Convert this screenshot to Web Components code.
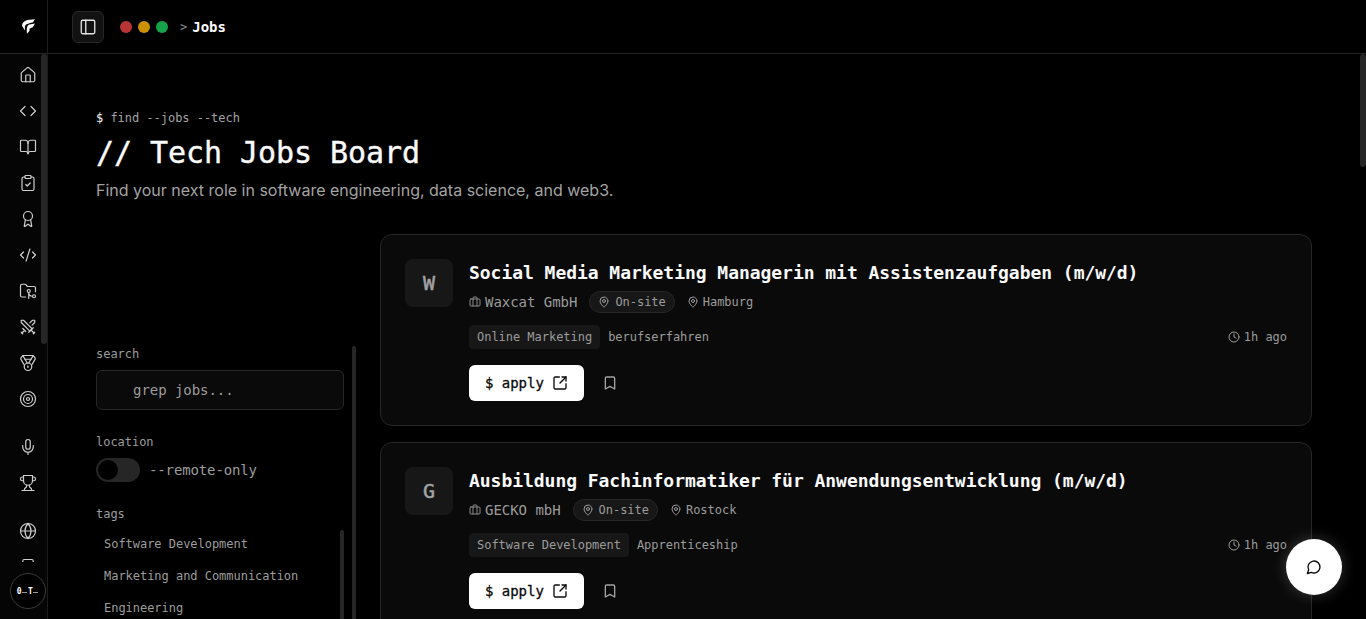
<!DOCTYPE html>
<html>
<head>
<meta charset="utf-8">
<title>Jobs</title>
<style>
    html, body { margin: 0; height: 100%; background: #000; overflow: hidden; }
    body {
        display: flex;
        color: #fafafa;
        font-family: "DejaVu Sans Mono", "Liberation Mono", monospace;
    }
</style>
</head>
<body>
<side-rail></side-rail>
<main-area>
    <top-bar></top-bar>
    <page-head></page-head>
    <jobs-layout>
        <job-filters slot="filters"></job-filters>
        <job-card title="Social Media Marketing Managerin mit Assistenzaufgaben (m/w/d)" company="Waxcat GmbH" letter="W" city="Hamburg" tag="Online Marketing" level="berufserfahren"></job-card>
        <job-card title="Ausbildung Fachinformatiker für Anwendungsentwicklung (m/w/d)" company="GECKO mbH" letter="G" city="Rostock" tag="Software Development" level="Apprenticeship"></job-card>
    </jobs-layout>
</main-area>
<chat-fab></chat-fab>

<script>
const ICONS = {
    house: '<path d="M15 21v-8a1 1 0 0 0-1-1h-4a1 1 0 0 0-1 1v8"/><path d="M3 10a2 2 0 0 1 .709-1.528l7-5.999a2 2 0 0 1 2.582 0l7 5.999A2 2 0 0 1 21 10v9a2 2 0 0 1-2 2H5a2 2 0 0 1-2-2z"/>',
    code: '<polyline points="16 18 22 12 16 6"/><polyline points="8 6 2 12 8 18"/>',
    book: '<path d="M12 7v14"/><path d="M3 18a1 1 0 0 1-1-1V4a1 1 0 0 1 1-1h5a4 4 0 0 1 4 4 4 4 0 0 1 4-4h5a1 1 0 0 1 1 1v13a1 1 0 0 1-1 1h-6a3 3 0 0 0-3 3 3 3 0 0 0-3-3z"/>',
    clipboard: '<rect width="8" height="4" x="8" y="2" rx="1" ry="1"/><path d="M16 4h2a2 2 0 0 1 2 2v14a2 2 0 0 1-2 2H6a2 2 0 0 1-2-2V6a2 2 0 0 1 2-2h2"/><path d="m9 14 2 2 4-4"/>',
    award: '<path d="m15.477 12.89 1.515 8.526a.5.5 0 0 1-.81.47l-3.58-2.687a1 1 0 0 0-1.197 0l-3.586 2.686a.5.5 0 0 1-.81-.469l1.514-8.526"/><circle cx="12" cy="8" r="6"/>',
    xml: '<path d="m18 16 4-4-4-4"/><path d="m6 8-4 4 4 4"/><path d="m14.5 4-5 16"/>',
    folder: '<path d="M9 20H4a2 2 0 0 1-2-2V5a2 2 0 0 1 2-2h3.9a2 2 0 0 1 1.69.9l.81 1.2a2 2 0 0 0 1.67.9H20a2 2 0 0 1 2 2v5"/><circle cx="13" cy="12" r="2"/><path d="M18 19c-2.8 0-5-2.2-5-5v8"/><circle cx="20" cy="19" r="2"/>',
    swords: '<polyline points="14.5 17.5 3 6 3 3 6 3 17.5 14.5"/><line x1="13" x2="19" y1="19" y2="13"/><line x1="16" x2="20" y1="16" y2="20"/><line x1="19" x2="21" y1="21" y2="19"/><polyline points="14.5 6.5 18 3 21 3 21 6 17.5 9.5"/><line x1="5" x2="9" y1="14" y2="18"/><line x1="7" x2="4" y1="17" y2="20"/><line x1="3" x2="5" y1="19" y2="21"/>',
    medal: '<path d="M7.21 15 2.66 7.14a2 2 0 0 1 .13-2.2L4.4 2.8A2 2 0 0 1 6 2h12a2 2 0 0 1 1.6.8l1.6 2.14a2 2 0 0 1 .14 2.2L16.79 15"/><path d="M11 12 5.12 2.2"/><path d="m13 12 5.88-9.8"/><path d="M8 7h8"/><circle cx="12" cy="17" r="5"/><path d="M12 18v-2h-.5"/>',
    target: '<circle cx="12" cy="12" r="10"/><circle cx="12" cy="12" r="6"/><circle cx="12" cy="12" r="2"/>',
    mic: '<path d="M12 19v3"/><path d="M19 10v2a7 7 0 0 1-14 0v-2"/><rect x="9" y="2" width="6" height="13" rx="3"/>',
    trophy: '<path d="M6 9H4.5a2.5 2.5 0 0 1 0-5H6"/><path d="M18 9h1.5a2.5 2.5 0 0 0 0-5H18"/><path d="M4 22h16"/><path d="M10 14.66V17c0 .55-.47.98-.97 1.21C7.85 18.75 7 20.24 7 22"/><path d="M14 14.66V17c0 .55.47.98.97 1.21C16.15 18.75 17 20.24 17 22"/><path d="M18 2H6v7a6 6 0 0 0 12 0V2Z"/>',
    globe: '<circle cx="12" cy="12" r="10"/><path d="M12 2a14.5 14.5 0 0 0 0 20 14.5 14.5 0 0 0 0-20"/><path d="M2 12h20"/>',
    phone: '<rect width="14" height="20" x="5" y="2" rx="2"/><path d="M12 18h.01"/>',
    panel: '<rect width="18" height="18" x="3" y="3" rx="2"/><path d="M9 3v18"/>',
    briefcase: '<path d="M16 20V4a2 2 0 0 0-2-2h-4a2 2 0 0 0-2 2v16"/><rect width="20" height="14" x="2" y="6" rx="2"/>',
    pin: '<path d="M20 10c0 4.993-5.539 10.193-7.399 11.799a1 1 0 0 1-1.202 0C9.539 20.193 4 14.993 4 10a8 8 0 0 1 16 0"/><circle cx="12" cy="10" r="3"/>',
    clock: '<circle cx="12" cy="12" r="10"/><polyline points="12 6 12 12 16 14"/>',
    external: '<path d="M21 13v6a2 2 0 0 1-2 2H5a2 2 0 0 1-2-2V5a2 2 0 0 1 2-2h6"/><path d="m21 3-9 9"/><path d="M15 3h6v6"/>',
    bookmark: '<path d="m19 21-7-4-7 4V5a2 2 0 0 1 2-2h10a2 2 0 0 1 2 2v16z"/>',
    message: '<path d="M7.9 20A9 9 0 1 0 4 16.1L2 22Z"/>',
};

function icon(name, size, width = 2) {
    return `<svg xmlns="http://www.w3.org/2000/svg" width="${size}" height="${size}" viewBox="0 0 24 24" fill="none" stroke="currentColor" stroke-width="${width}" stroke-linecap="round" stroke-linejoin="round" style="display:block;flex:none">${ICONS[name]}</svg>`;
}

class SideRail extends HTMLElement {
    constructor() {
        super();
        this.attachShadow({ mode: 'open' });
    }

    connectedCallback() {
        const groups = [
            ['house', 'code', 'book', 'clipboard', 'award', 'xml', 'folder', 'swords', 'medal', 'target'],
            ['mic', 'trophy'],
            ['globe', 'phone'],
        ];
        const nav = groups.map(group => `
            <div class="group">${group.map(name => `<span class="item">${icon(name, 18, 1.6)}</span>`).join('')}</div>
        `).join('');

        this.shadowRoot.innerHTML = `
            <style>
                :host {
                    display: flex;
                    flex-direction: column;
                    flex: none;
                    width: 47px;
                    height: 100vh;
                    border-right: 1px solid #1c1c1c;
                    background: #050505;
                    position: relative;
                    overflow: hidden;
                }
                .logo {
                    flex: none;
                    height: 54px;
                    box-sizing: border-box;
                    display: flex;
                    align-items: center;
                    padding: 0 0 1px 22px;
                    border-bottom: 1px solid #262626;
                    background: #000;
                }
                nav {
                    flex: 1;
                    min-height: 0;
                    overflow: hidden;
                    padding: 3px 0 0;
                    color: #cfcfcf;
                }
                .group { display: flex; flex-direction: column; margin-bottom: 12px; }
                .item {
                    height: 36px;
                    display: flex;
                    align-items: center;
                    padding-left: 19px;
                }
                .bottom {
                    flex: none;
                    height: 57px;
                    box-sizing: border-box;
                    padding: 11px 0 0 10px;
                    background: #050505;
                }
                .avatar {
                    width: 36px;
                    height: 36px;
                    box-sizing: border-box;
                    border: 1px solid #3a3a3a;
                    border-radius: 50%;
                    background: #000;
                    display: flex;
                    align-items: center;
                    justify-content: center;
                    color: #fff;
                    font-size: 8px;
                    font-weight: 700;
                    letter-spacing: -.5px;
                    white-space: nowrap;
                }
                .dash { width: 5px; height: 1px; background: #999; margin: 2px 1px 0; }
                .thumb {
                    position: absolute;
                    left: 41px;
                    top: 54px;
                    width: 6px;
                    height: 290px;
                    border-radius: 3px;
                    background: #262626;
                }
            </style>
            <div class="logo">
                <svg width="13" height="15" viewBox="0 0 40 44" fill="#fafafa"><path d="M40 0 16 2C6 5 0 11 0 20L9 34V22C11 16 17 13 33 10Z"/><path d="M40 13 23 16C16 18 14 24 15 44L23 36V29L33 24Z"/></svg>
            </div>
            <nav>${nav}</nav>
            <div class="bottom"><span class="avatar">0<span class="dash"></span>T<span class="dash"></span></span></div>
            <span class="thumb"></span>
        `;
    }
}

class TopBar extends HTMLElement {
    constructor() {
        super();
        this.attachShadow({ mode: 'open' });
    }

    connectedCallback() {
        this.shadowRoot.innerHTML = `
            <style>
                :host {
                    display: flex;
                    align-items: center;
                    flex: none;
                    height: 53px;
                    padding-left: 24px;
                    border-bottom: 1px solid #262626;
                }
                .toggle {
                    width: 32px;
                    height: 32px;
                    box-sizing: border-box;
                    display: flex;
                    align-items: center;
                    justify-content: center;
                    border: 1px solid #262626;
                    border-radius: 6px;
                    background: #121212;
                    color: #e5e5e5;
                    margin-right: 16px;
                }
                .dot { width: 12px; height: 12px; border-radius: 50%; margin-right: 6px; }
                .sep { color: #8a8a8a; font-size: 12px; margin-left: 6px; margin-right: 5px; }
                .page { color: #fafafa; font-size: 14px; font-weight: 700; letter-spacing: -.03px; }
            </style>
            <span class="toggle">${icon('panel', 18, 1.75)}</span>
            <span class="dot" style="background:#b93434"></span>
            <span class="dot" style="background:#ca9200"></span>
            <span class="dot" style="background:#16a34a"></span>
            <span class="sep">&gt;</span>
            <span class="page">Jobs</span>
        `;
    }
}

class PageHead extends HTMLElement {
    constructor() {
        super();
        this.attachShadow({ mode: 'open' });
    }

    connectedCallback() {
        this.shadowRoot.innerHTML = `
            <style>
                :host {
                    display: block;
                    flex: none;
                    padding: 56px 48px 0;
                    height: 180px;
                    box-sizing: border-box;
                }
                .cmd { font-size: 12px; line-height: 16px; color: #a3a3a3; letter-spacing: -.03px; }
                .cmd b { color: #fafafa; font-weight: 400; }
                h1 {
                    margin: 9px 0 0;
                    font-size: 30px;
                    line-height: 36px;
                    font-weight: 400;
                    -webkit-text-stroke: .4px #fafafa;
                    letter-spacing: -.06px;
                    color: #fafafa;
                }
                p {
                    margin: 7px 0 0;
                    font: 400 16px/24px Inter, "Liberation Sans", sans-serif;
                    color: #a3a3a3;
                }
            </style>
            <div class="cmd"><b>$</b> find --jobs --tech</div>
            <h1>// Tech Jobs Board</h1>
            <p>Find your next role in software engineering, data science, and web3.</p>
        `;
    }
}

class MainArea extends HTMLElement {
    constructor() {
        super();
        this.attachShadow({ mode: 'open' });
    }

    connectedCallback() {
        this.shadowRoot.innerHTML = `
            <style>
                :host {
                    display: flex;
                    flex-direction: column;
                    flex: 1;
                    min-width: 0;
                    height: 100vh;
                    overflow: hidden;
                    position: relative;
                }
                .thumb {
                    position: absolute;
                    right: 0;
                    top: 54px;
                    width: 6px;
                    height: 113px;
                    border-radius: 3px;
                    background: #262626;
                }
            </style>
            <slot></slot>
            <span class="thumb"></span>
        `;
    }
}

class JobsLayout extends HTMLElement {
    constructor() {
        super();
        this.attachShadow({ mode: 'open' });
    }

    connectedCallback() {
        this.shadowRoot.innerHTML = `
            <style>
                :host {
                    display: flex;
                    gap: 24px;
                    flex: none;
                    padding: 0 54px 0 48px;
                }
                .filters { flex: none; width: 260px; padding-top: 112px; box-sizing: border-box; }
                .list { flex: 1; min-width: 0; display: flex; flex-direction: column; gap: 16px; }
            </style>
            <div class="filters"><slot name="filters"></slot></div>
            <div class="list"><slot></slot></div>
        `;
    }
}

class JobFilters extends HTMLElement {
    constructor() {
        super();
        this.attachShadow({ mode: 'open' });
    }

    connectedCallback() {
        const tags = ['Software Development', 'Marketing and Communication', 'Engineering'];
        this.shadowRoot.innerHTML = `
            <style>
                :host {
                    display: block;
                    position: relative;
                    width: 248px;
                    color: #9c9c9c;
                }
                label { display: block; font-size: 12px; line-height: 16px; margin-bottom: 8px; letter-spacing: -.03px; }
                .input {
                    height: 40px;
                    box-sizing: border-box;
                    border: 1px solid #262626;
                    border-radius: 6px;
                    background: #0a0a0a;
                    padding-left: 36px;
                    display: flex;
                    align-items: center;
                    font-size: 14px;
                    letter-spacing: -.05px;
                    margin-bottom: 24px;
                }
                .remote {
                    display: flex;
                    align-items: center;
                    gap: 9px;
                    font-size: 14px;
                    letter-spacing: -.13px;
                    height: 24px;
                    margin-bottom: 24px;
                }
                .switch {
                    width: 44px;
                    height: 24px;
                    border-radius: 12px;
                    background: #262626;
                    box-sizing: border-box;
                    padding: 2px;
                }
                .knob { display: block; width: 20px; height: 20px; border-radius: 50%; background: #000; }
                .tag { font-size: 12px; line-height: 16px; padding: 8px; letter-spacing: -.03px; }
                .thumb-outer, .thumb-inner {
                    position: absolute;
                    width: 4px;
                    border-radius: 2px;
                    background: #262626;
                }
                .thumb-outer { left: 256px; top: 0; height: 300px; }
                .thumb-inner { left: 244px; top: 184px; height: 120px; }
            </style>
            <label>search</label>
            <div class="input">grep jobs...</div>
            <label>location</label>
            <div class="remote"><span class="switch"><span class="knob"></span></span>--remote-only</div>
            <label style="margin-bottom:6px">tags</label>
            ${tags.map(t => `<div class="tag">${t}</div>`).join('')}
            <span class="thumb-outer"></span>
            <span class="thumb-inner"></span>
        `;
    }
}

class JobCard extends HTMLElement {
    constructor() {
        super();
        this.attachShadow({ mode: 'open' });
    }

    connectedCallback() {
        const title = this.getAttribute('title');
        const company = this.getAttribute('company');
        const letter = this.getAttribute('letter');
        const city = this.getAttribute('city');
        const tag = this.getAttribute('tag');
        const level = this.getAttribute('level');

        this.shadowRoot.innerHTML = `
            <style>
                :host {
                    display: flex;
                    gap: 16px;
                    box-sizing: border-box;
                    height: 192px;
                    padding: 24px;
                    background: #0a0a0a;
                    border: 1px solid #262626;
                    border-radius: 12px;
                }
                .logo {
                    flex: none;
                    width: 48px;
                    height: 48px;
                    border-radius: 8px;
                    background: #171717;
                    color: #a3a3a3;
                    display: flex;
                    align-items: center;
                    justify-content: center;
                    font-size: 20px;
                    -webkit-text-stroke: .5px #a3a3a3;
                }
                .body { flex: 1; min-width: 0; }
                h3 {
                    margin: 0;
                    font-size: 18px;
                    line-height: 28px;
                    font-weight: 700;
                    color: #fafafa;
                    letter-spacing: -.04px;
                }
                .meta {
                    display: flex;
                    align-items: center;
                    margin-top: 3px;
                    height: 24px;
                    color: #9c9c9c;
                    font-size: 12px;
                    letter-spacing: -.03px;
                }
                .company { display: flex; align-items: center; gap: 4px; font-size: 14px; margin-right: 12px; letter-spacing: -.03px; }
                .company svg { color: #8a8a8a; }
                .site {
                    display: flex;
                    align-items: center;
                    gap: 5px;
                    height: 22px;
                    box-sizing: border-box;
                    padding: 0 8px;
                    border: 1px solid #262626;
                    border-radius: 11px;
                    background: #171717;
                    margin-right: 12px;
                }
                .city { display: flex; align-items: center; gap: 4px; }
                .tags {
                    display: flex;
                    align-items: center;
                    margin-top: 11px;
                    height: 24px;
                    font-size: 12px;
                    letter-spacing: -.03px;
                    color: #9c9c9c;
                }
                .tag { padding: 0 8px; height: 24px; line-height: 24px; background: #171717; border-radius: 4px; margin-right: 8px; }
                .ago { margin-left: auto; display: flex; align-items: center; gap: 4px; }
                .actions { display: flex; align-items: center; margin-top: 16px; }
                .apply {
                    display: flex;
                    align-items: center;
                    gap: 8px;
                    box-sizing: border-box;
                    width: 115px;
                    height: 36px;
                    padding: 0 16px;
                    border-radius: 6px;
                    background: #fff;
                    color: #0a0a0a;
                    font-size: 14px;
                    letter-spacing: -.03px;
                }
                .apply span { -webkit-text-stroke: .3px #0a0a0a; }
                .save { margin-left: 18px; color: #a3a3a3; }
            </style>
            <div class="logo">${letter}</div>
            <div class="body">
                <h3>${title}</h3>
                <div class="meta">
                    <span class="company">${icon('briefcase', 12)}${company}</span>
                    <span class="site">${icon('pin', 12)}On-site</span>
                    <span class="city">${icon('pin', 12)}${city}</span>
                </div>
                <div class="tags">
                    <span class="tag">${tag}</span>
                    <span>${level}</span>
                    <span class="ago">${icon('clock', 12)}1h ago</span>
                </div>
                <div class="actions">
                    <span class="apply"><span>$ apply</span>${icon('external', 16)}</span>
                    <span class="save">${icon('bookmark', 16)}</span>
                </div>
            </div>
        `;
    }
}

class ChatFab extends HTMLElement {
    constructor() {
        super();
        this.attachShadow({ mode: 'open' });
    }

    connectedCallback() {
        this.shadowRoot.innerHTML = `
            <style>
                :host {
                    position: fixed;
                    right: 24px;
                    bottom: 24px;
                    width: 56px;
                    height: 56px;
                    border-radius: 50%;
                    background: #fff;
                    color: #0a0a0a;
                    display: flex;
                    align-items: center;
                    justify-content: center;
                    box-shadow: 0 0 15px rgba(255,255,255,.2);
                }
            </style>
            ${icon('message', 16)}
        `;
    }
}

customElements.define('side-rail', SideRail);
customElements.define('top-bar', TopBar);
customElements.define('page-head', PageHead);
customElements.define('main-area', MainArea);
customElements.define('jobs-layout', JobsLayout);
customElements.define('job-filters', JobFilters);
customElements.define('job-card', JobCard);
customElements.define('chat-fab', ChatFab);
</script>
</body>
</html>
